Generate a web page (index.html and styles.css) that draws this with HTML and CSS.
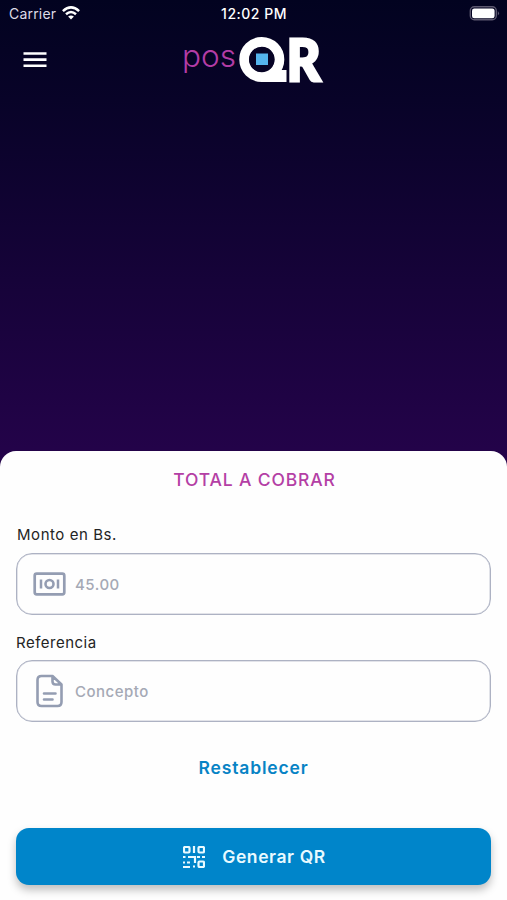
FILE: index.html
```html
<!DOCTYPE html>
<html lang="es">
<head>
<meta charset="utf-8">
<meta name="viewport" content="width=device-width, initial-scale=1">
<title>posQR</title>
<link rel="stylesheet" href="styles.css">
</head>
<body>
<div class="app">
  <div class="status">
    <div class="carrier"><span>Carrier</span>
      <svg class="wifi" width="18" height="14" viewBox="0 0 18 14"><g fill="none" stroke="#fff" stroke-width="2.5"><path d="M.9 5.1Q9-2.3 17.1 5.1"/><path d="M4 8.3Q9 3.8 14 8.3"/></g><path fill="#fff" d="M6.1 10.6Q9 8.3 11.9 10.6L9 13.6Z"/></svg>
    </div>
    <span class="time">12:02 PM</span>
    <svg class="battery" width="31" height="15" viewBox="0 0 31 15"><rect x="1.300" y=".8" width="26" height="13" rx="4" fill="none" stroke="#5d5970" stroke-width="1.4"/><rect x="3" y="2.400" width="22.600" height="9.800" rx="2.3" fill="#fff"/><path d="M28.800 5q2.400 2.300 0 4.600z" fill="#5d5970"/></svg>
  </div>
  <header class="top">
    <button class="menu" aria-label="Menú"><svg width="24" height="18" viewBox="0 0 24 18"><path d="M.5 2.500h23M.5 8.600h23M.5 14.700h23" stroke="#fff" stroke-width="2.600"/></svg></button>
    <svg class="logo" width="144" height="54" viewBox="0 0 144 54" role="img" aria-label="posQR">
      <text class="pos" x="1" y="34.500" textLength="54" lengthAdjust="spacingAndGlyphs">pos</text>
      <circle cx="80.800" cy="27.500" r="17.500" fill="none" stroke="#fff" stroke-width="10"/>
      <path d="M80.800 40L92 36l7.500 2h6V50H80.800z" fill="#fff"/>
      <circle cx="80.800" cy="27.500" r="12.800" fill="#070325"/>
      <rect x="75" y="21.500" width="12" height="11.500" fill="#55b4ed"/>
      <text class="mark" x="105.800" y="48.500" textLength="33.800" lengthAdjust="spacingAndGlyphs">R</text>
    </svg>
  </header>
  <main class="sheet">
    <h1>TOTAL A COBRAR</h1>
    <label class="lab-amount" for="monto">Monto en Bs.</label>
    <div class="field">
      <svg width="33" height="36" viewBox="0 0 33 36" fill="none" stroke="#949db2"><rect x="1.700" y="7.700" width="29.600" height="20.600" rx="2" stroke-width="2.700"/><circle cx="16.500" cy="18" r="4" stroke-width="2.600"/><path d="M8 13.500v9M25 13.500v9" stroke-width="2.500"/></svg>
      <input class="amount" id="monto" placeholder="45.00">
    </div>
    <label class="lab-ref" for="ref">Referencia</label>
    <div class="field">
      <svg width="33" height="36" viewBox="0 0 33 36" fill="none" stroke="#949db2" stroke-width="2.600" stroke-linejoin="round" stroke-linecap="round"><path d="M19.500 3H8.500Q4.500 3 4.500 7v22q0 4 4 4h16q4 0 4-4V11.500ZM19.500 3v5.500q0 3 3 3h6M11 20.500h11.500M11 26.500h8.500"/></svg>
      <input class="concept" id="ref" placeholder="Concepto">
    </div>
    <button class="reset">Restablecer</button>
    <button class="generate">
      <svg width="22" height="22" viewBox="0 0 22 22" fill="none" stroke="#e9faff" stroke-width="2.200"><rect x="1" y="1" width="5.500" height="5.500" rx="1"/><rect x="15.500" y="1" width="5.500" height="5.500" rx="1"/><rect x="15.500" y="15.500" width="5.500" height="5.500" rx="1"/><path d="M11 0v7M0 11h2.500M5 11h7v6M14 11h3M19 11h3M0 16.500h2M4 16.500h3M0 21h7M10 20.500h2"/></svg>
      <span>Generar QR</span>
    </button>
  </main>
</div>
</body>
</html>
```
FILE: styles.css
```css
* { box-sizing: border-box; }
body { margin: 0; font-family: Inter, "Liberation Sans", sans-serif; }
.app { width: 507px; height: 900px; display: flex; flex-direction: column; overflow: hidden; background: linear-gradient(#020320 0, #080328 100px, #24034a 460px); }
.status { height: 28px; padding: 0 7px 2px 9px; display: grid; grid-template-columns: 1fr auto 1fr; align-items: center; color: #fff; }
.carrier { display: flex; align-items: center; gap: 6px; font-size: 14px; letter-spacing: .2px; color: #dddbe6; }
.wifi { margin-top: -1px; }
.time { margin-right: 1px; font-size: 14px; font-weight: 500; letter-spacing: .5px; }
.battery { justify-self: end; }
.top { height: 423px; padding: 4px 24px 0 23px; display: grid; grid-template-columns: 1fr 144px 1fr; align-items: start; }
button { border: 0; padding: 0; background: none; font-family: inherit; }
.menu { width: 24px; height: 18px; margin-top: 19px; }
svg { display: block; }
.logo { overflow: visible; }
.pos { font: 300 31px Inter, sans-serif; fill: #b43ca6; }
.mark { font: 900 58px Lato, sans-serif; fill: #fff; stroke: #fff; stroke-width: 3px; }
.sheet { flex: 1; display: flex; flex-direction: column; padding: 0 16px; background: #fefefe; border-radius: 16px 16px 0 0; }
h1 { margin: 19px 0 0 2px; text-align: center; font-size: 17.500px; line-height: 20px; font-weight: 500; letter-spacing: .85px; color: #b43fa5; }
label { font-size: 15px; line-height: 20px; color: #242424; }
.lab-amount { margin: 35px 0 0 1px; letter-spacing: .55px; }
.lab-ref { margin-top: 17px; padding-top: 1px; margin-bottom: -1px; letter-spacing: .5px; }
.field { height: 62px; margin-top: 8px; padding: 0 17px 0 16px; display: flex; align-items: center; gap: 9px; border: 1px solid #adb2c3; box-shadow: inset 0 0 0 .5px #c5c8d4; border-radius: 16px; }
input { flex: 1; min-width: 0; border: 0; padding: 0; outline: 0; background: none; font: 500 15px Inter, sans-serif; letter-spacing: .5px; }
input::placeholder { color: #a5a9b5; opacity: 1; }
.reset { align-self: center; margin-top: 36px; font-size: 17.500px; line-height: 20px; font-weight: 600; letter-spacing: .85px; color: #0783c5; }
.generate { height: 57px; margin-top: 50px; padding-left: 2px; display: flex; align-items: center; justify-content: center; gap: 17px; border-radius: 13px; background: #0085ca; box-shadow: 0 5px 9px rgba(0,0,0,.25); color: #e9faff; font-size: 17.500px; font-weight: 600; letter-spacing: .6px; }
```
